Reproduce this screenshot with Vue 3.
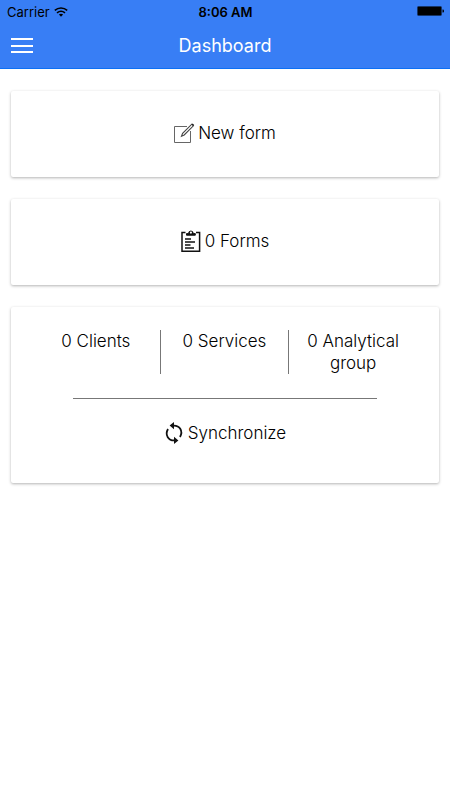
<script setup>
import { ref } from 'vue'

const forms = ref(0)
const stats = ref([
  { count: 0, label: 'Clients' },
  { count: 0, label: 'Services' },
  { count: 0, label: 'Analytical group' },
])
</script>

<template>
  <div class="page">
    <header class="header">
      <div class="status">
        <div class="carrier">
          <span>Carrier</span>
          <svg class="wifi" viewBox="0 0 14 10" aria-hidden="true">
            <path d="M0.8 3.4C4.4 0.2 9.6 0.2 13.2 3.4M3 5.9C5.4 3.9 8.6 3.9 11 5.9" fill="none" stroke="#000" stroke-width="1.6" />
            <path d="M4.9 7.6C6.1 6.6 7.9 6.6 9.1 7.6L7 9.8Z" />
          </svg>
        </div>
        <time class="time">8:06 AM</time>
        <svg class="battery" viewBox="0 0 27 11" aria-hidden="true">
          <rect x="0.5" y="0.5" width="24" height="9" rx="1" fill="#000" stroke="#173566" />
          <path d="M25.5 3.5H26.3Q27 4 27 5T26.3 6.5H25.5Z" />
        </svg>
      </div>
      <div class="bar">
        <button class="menu" type="button" aria-label="Menu">
          <svg viewBox="0 0 22 16" aria-hidden="true">
            <path d="M0 1H22M0 8H22M0 14H22" stroke="#fff" stroke-width="2" />
          </svg>
        </button>
        <h1>Dashboard</h1>
      </div>
    </header>

    <main class="content">
      <button class="card action" type="button">
        <svg class="icon" viewBox="0 0 22 22" fill="none" stroke="#444" aria-hidden="true">
          <path d="M14 4.5H1.5V20.5H17.5V9" stroke="#666" />
          <path d="M8.5 14.2L9.6 11.4L18.8 2.2L20.4 3.8L11.2 13Z" stroke-width="1.1" />
          <path d="M18.6 2.4L19.6 1.4L21.2 3L20.2 4Z" fill="#222" stroke="none" />
        </svg>
        <span>New form</span>
      </button>

      <button class="card action" type="button">
        <svg class="icon" viewBox="0 0 22 22" fill="none" stroke="#111" aria-hidden="true">
          <path d="M5.5 2.5H2V21.2H19.6V2.5H16" stroke-width="1.5" />
          <path d="M6.5 5.2V3.6H8.6A2.3 2.6 0 0 1 13.2 3.6H15.3V5.2Z" fill="#111" />
          <circle cx="10.9" cy="2.6" r="1.1" fill="#fff" stroke="none" />
          <path d="M5 9H11M5 12H15M5 15H10.5M5 18H14" stroke-width="1.4" />
        </svg>
        <span>{{ forms }} Forms</span>
      </button>

      <section class="card summary">
        <ul class="stats">
          <li v-for="item in stats" :key="item.label">{{ item.count }} {{ item.label }}</li>
        </ul>
        <hr />
        <button class="action sync" type="button">
          <svg class="icon" viewBox="0 0 22 22" fill="none" stroke="#111" stroke-width="1.8" aria-hidden="true">
            <path d="M10 3.6C16.5 3 20.5 9 17 15" />
            <path d="M12 18.4C5.5 19 1.5 13 5 7" />
            <path d="M11 0V7.2L6.6 3.6ZM11 14.8V22L15.4 18.4Z" fill="#111" stroke="none" />
          </svg>
          <span>Synchronize</span>
        </button>
      </section>
    </main>
  </div>
</template>

<style>
body {
  margin: 0;
  background: #fff;
}
</style>

<style scoped>
.page {
  min-height: 100vh;
  font-family: Inter, "Liberation Sans", sans-serif;
  font-size: 17px;
  font-weight: 300;
  line-height: 22px;
  color: #000;
}
.header {
  background: #387ef5;
  border-bottom: 1px solid #0c70f5;
}
.status {
  display: grid;
  grid-template-columns: 1fr auto 1fr;
  align-items: center;
  height: 23px;
  padding: 0 6px 0 7px;
  font-size: 13px;
  font-weight: 400;
}
.carrier {
  display: flex;
  align-items: center;
  gap: 4px;
}
.wifi {
  width: 14px;
  height: 10px;
}
.time {
  font-weight: 600;
}
.battery {
  width: 27px;
  height: 11px;
  justify-self: end;
}
.bar {
  display: grid;
  grid-template-columns: 1fr auto 1fr;
  align-items: center;
  height: 45px;
  padding: 0 11px;
}
.menu {
  display: flex;
  justify-self: start;
  padding: 0;
  border: 0;
  background: none;
  cursor: pointer;
}
.menu svg {
  width: 22px;
  height: 16px;
}
h1 {
  margin: 0;
  font-size: 18px;
  font-weight: 400;
  color: #fff;
}
.content {
  display: flex;
  flex-direction: column;
  gap: 22px;
  padding: 22px 11px;
}
.card {
  border-radius: 2px;
  background: #fff;
  box-shadow: 0 1px 3px rgba(0, 0, 0, 0.3);
}
.action {
  display: flex;
  align-items: center;
  justify-content: center;
  gap: 3px;
  width: 100%;
  padding: 31px 1px 33px 0;
  border: 0;
  font: inherit;
  color: inherit;
  cursor: pointer;
}
.icon {
  width: 22px;
  height: 22px;
}
.summary {
  padding: 23px 21px 39px;
}
.stats {
  display: grid;
  grid-template-columns: repeat(3, 1fr);
  margin: 0;
  padding: 0;
  list-style: none;
  text-align: center;
}
.stats li {
  padding: 0 16px;
  border-right: 1px solid #777;
}
.stats li:last-child {
  border-right-color: transparent;
}
hr {
  width: 79%;
  margin: 24px auto 23px;
  border: 0;
  border-top: 1px solid #777;
}
.sync {
  padding: 0 1px 0 0;
  background: none;
}
</style>
